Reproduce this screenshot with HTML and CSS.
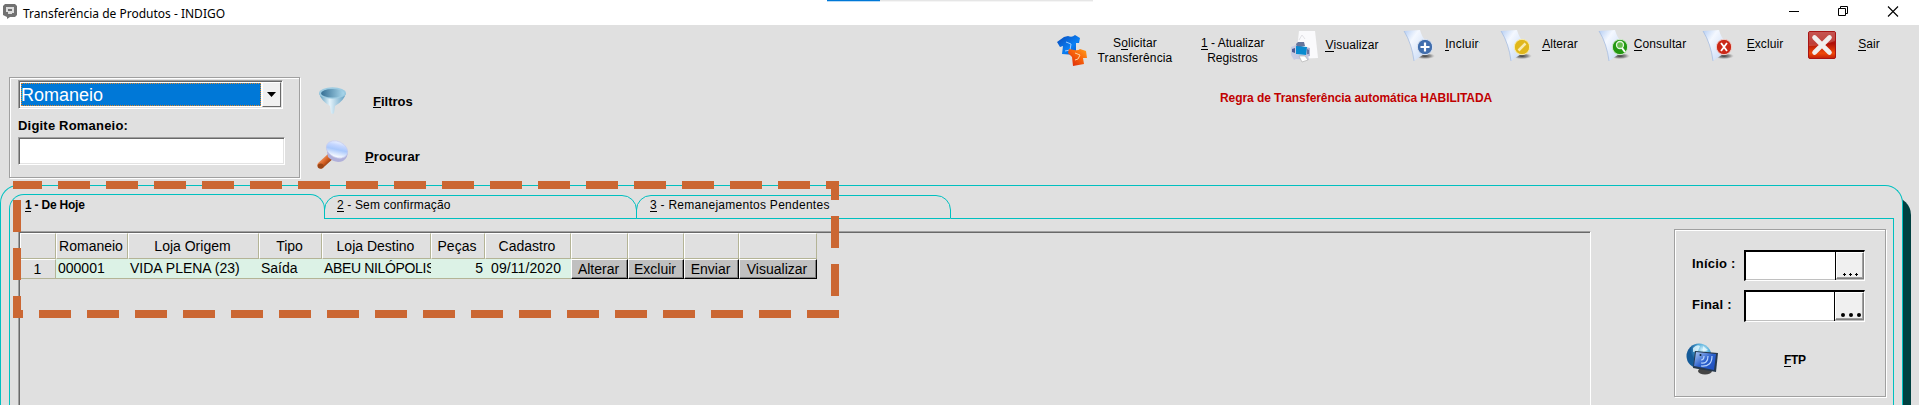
FILE: index.html
```html
<!DOCTYPE html>
<html lang="pt-BR">
<head>
<meta charset="utf-8">
<title>Transferência de Produtos - INDIGO</title>
<link rel="stylesheet" href="styles.css">
</head>
<body>
<svg width="0" height="0" class="defs">
  <defs>
    <linearGradient id="page" x1="0" y1="0" x2="1" y2="1"><stop offset="0" stop-color="#b4cdf3"/><stop offset=".35" stop-color="#f4f8ff"/><stop offset="1" stop-color="#c4d7f4"/></linearGradient>
    <linearGradient id="blue" x1="0" y1="0" x2="1" y2="1"><stop offset="0" stop-color="#0848b8"/><stop offset=".6" stop-color="#0a80f4"/><stop offset="1" stop-color="#0648c0"/></linearGradient>
    <linearGradient id="orange" x1="0" y1="1" x2="1" y2="0"><stop offset="0" stop-color="#d81c08"/><stop offset=".6" stop-color="#fa6a0c"/><stop offset="1" stop-color="#ffa020"/></linearGradient>
    <linearGradient id="funnel" x1="0" y1="0" x2="1" y2="0"><stop offset="0" stop-color="#5598ba"/><stop offset=".4" stop-color="#e4f3fb"/><stop offset="1" stop-color="#5c9cc0"/></linearGradient>
    <linearGradient id="funnelin" x1="0" y1="0" x2="1" y2="0"><stop offset="0" stop-color="#356f94"/><stop offset="1" stop-color="#a9d7ec"/></linearGradient>
    <linearGradient id="lens" x1="0" y1="0" x2=".3" y2="1"><stop offset="0" stop-color="#ffffff"/><stop offset=".35" stop-color="#c4d6ff"/><stop offset=".6" stop-color="#a9c8fc"/><stop offset="1" stop-color="#f4f8ff"/></linearGradient>
    <linearGradient id="handle" gradientUnits="userSpaceOnUse" x1="5" y1="18" x2="12" y2="25"><stop offset="0" stop-color="#f09058"/><stop offset=".5" stop-color="#d05c20"/><stop offset="1" stop-color="#82350c"/></linearGradient>
    <linearGradient id="exit" x1="0" y1="0" x2="0" y2="1"><stop offset="0" stop-color="#b82c28"/><stop offset=".45" stop-color="#b01008"/><stop offset=".8" stop-color="#f04808"/><stop offset="1" stop-color="#c02008"/></linearGradient>
    <radialGradient id="globe" cx=".65" cy=".25"><stop offset="0" stop-color="#d8f4fc"/><stop offset=".5" stop-color="#58b0dc"/><stop offset="1" stop-color="#145a98"/></radialGradient>
    <linearGradient id="screen" x1="0" y1="0" x2="1" y2="1"><stop offset="0" stop-color="#b0ccf4"/><stop offset=".5" stop-color="#2c60cc"/><stop offset="1" stop-color="#1c4cbc"/></linearGradient>
    <radialGradient id="shade"><stop offset="0" stop-color="#333"/><stop offset=".6" stop-color="#777" stop-opacity=".7"/><stop offset="1" stop-color="#aaa" stop-opacity="0"/></radialGradient>
    <symbol id="sheet" viewBox="0 0 32 33">
      <ellipse cx="22" cy="27" rx="10" ry="3.2" fill="url(#shade)"/>
      <path d="M1 2 17 1Q19 8 22 11L21 25 11 32Q9 15 1 2Z" fill="url(#page)"/>
      <path d="M1 2Q9 15 11 32" fill="none" stroke="#9fb8de" stroke-width=".7"/>
    </symbol>
  </defs>
</svg>

<header class="titlebar">
  <svg class="app-icon" width="14" height="15" viewBox="0 0 14 15"><path d="M2 0h10l2 2v9l-2 2H7l-3 2v-2L0 11V2Z" fill="#727272"/><path d="M3 3h8v6H9v1H5V8H3Z" fill="#ddd"/><path d="M5 5h4v2H5Z" fill="#727272"/></svg>
  <h1 class="title">Transferência de Produtos - INDIGO</h1>
  <div class="progress"><i></i></div>
  <svg class="controls" width="112" height="12" viewBox="0 0 112 12"><path d="M0 5.500h10M49.500 2.500h7v7h-7zM51.500 2.500v-2h7v7h-2" fill="none" stroke="#000"/><path d="m99 .5 10 10M109 .5l-10 10" stroke="#000" stroke-width="1.100"/></svg>
</header>

<nav class="toolbar">
  <button class="tool request">
    <svg width="30" height="32" viewBox="0 0 30 32"><path d="M7 3 11 2Q15 4 18 1L23 4 22 9 19 9 19 21 5 20 6 12 3 13 0 8Z" fill="url(#blue)"/><path d="m9 8 5 2-1 6-5 1" fill="none" stroke="#9ccbff"/><path d="m12 15 5 1q4 1 6-1l6 2 1 7h-4l1 6-11 2-1-9-4-4Z" fill="url(#orange)"/><path d="m18 19 5 2-2 4-3 1" fill="none" stroke="#ffd0a0"/></svg>
    <span>S<u>o</u>licitar<br>Transferência</span>
  </button>
  <button class="tool refresh"><span><u>1</u> - Atualizar<br>Registros</span></button>
  <button class="tool view">
    <svg width="28" height="33" viewBox="0 0 28 33"><path d="M9 1 25 1 28 28 6 29Z" fill="#fafafc"/><path d="m9 10 3-5 3 4" fill="none" stroke="#e2e2e6"/><path d="M6 14 8 12h6l1 4-8 2Z" fill="#66769c"/><path d="m1 17 5-2v14l-2 1-3-5Z" fill="#c9cbe2"/><path d="m2 19 3-1v5l-3-1Z" fill="#4d5c94"/><path d="m16 17 4 1v8l-4 1Z" fill="#b4b8d6"/><path d="m17 19 2 1v4h-2Z" fill="#6a739f"/><path d="m4 24 14 1 1 5-13-1Z" fill="#c5c9e2"/><path d="m6 16 11 1-1 8-10-1Z" fill="#0a8bd0"/><path d="m9 26 6 0 3 4-6 2Z" fill="#fff" stroke="#aaa" stroke-width=".6"/></svg>
    <span><u>V</u>isualizar</span>
  </button>
  <button class="tool add">
    <svg width="32" height="33" viewBox="0 0 32 33"><use href="#sheet"/><circle cx="22" cy="18" r="7.7" fill="#416ead" stroke="#e0e8f4"/><path d="M22 13.500v9M17.500 18h9" stroke="#fff" stroke-width="2.200"/></svg>
    <span><u>I</u>ncluir</span>
  </button>
  <i class="tick"></i>
  <button class="tool edit">
    <svg width="32" height="33" viewBox="0 0 32 33"><use href="#sheet"/><circle cx="22" cy="18" r="7.7" fill="#e0b71b" stroke="#f8edb0"/><path d="m18.500 21.500 7-7" stroke="#f8ebb0" stroke-width="2.500"/></svg>
    <span><u>A</u>lterar</span>
  </button>
  <button class="tool find">
    <svg width="32" height="33" viewBox="0 0 32 33"><use href="#sheet"/><circle cx="22" cy="18" r="7.7" fill="#239812" stroke="#d4ecd0"/><circle cx="22" cy="16" r="3.500" fill="#65bd4c" stroke="#e4f6df" stroke-width="1.300"/><path d="m24 19 3 4" stroke="#fff" stroke-width="2"/></svg>
    <span><u>C</u>onsultar</span>
  </button>
  <button class="tool remove">
    <svg width="32" height="33" viewBox="0 0 32 33"><use href="#sheet"/><circle cx="22" cy="18" r="7.7" fill="#cb2817" stroke="#f0d4d0"/><path d="m19 14 6 8m0-8-6 8" stroke="#fff" stroke-width="1.800"/></svg>
    <span><u>E</u>xcluir</span>
  </button>
  <button class="tool exit">
    <svg width="28" height="28" viewBox="0 0 28 28"><rect x=".5" y=".5" width="27" height="27" rx="1.500" fill="url(#exit)" stroke="#a81414"/><path d="M1 1h26v9Q14 15 1 15Z" fill="#fff" opacity=".2"/><path d="m6.500 6.500 15 15m0-15-15 15" stroke="#f0eeee" stroke-width="4.600" stroke-linecap="round"/></svg>
    <span><u>S</u>air</span>
  </button>
</nav>

<section class="filters">
  <div class="etched search">
    <div class="combo"><span>Romaneio</span><b><svg width="9" height="5" viewBox="0 0 9 5"><path d="M0 0h9L4.500 5Z"/></svg></b></div>
    <label class="caption">Digite Romaneio:</label>
    <div class="textbox"></div>
  </div>
  <div class="actions">
    <button class="action">
      <svg width="31" height="30" viewBox="0 0 31 30"><path d="M2 7Q4 15 13 20l1 7q1.500 2 3 0l1-7Q27 15 29 7Z" fill="url(#funnel)"/><ellipse cx="15.500" cy="7" rx="13.500" ry="5.800" fill="#9dcbe1"/><ellipse cx="15.500" cy="7.300" rx="11.500" ry="4.300" fill="url(#funnelin)"/></svg>
      <span class="lbl-filter"><u>F</u>iltros</span>
    </button>
    <button class="action">
      <svg width="31" height="30" viewBox="0 0 31 30"><path d="M4 25 15 15" stroke="url(#handle)" stroke-width="7" stroke-linecap="round"/><ellipse cx="3.600" cy="26" rx="3" ry="2.600" fill="#9c4616"/><path d="M9 6 11 17q7 7 15 4 5-3 5-10Z" fill="#b0b0da"/><ellipse cx="20" cy="9.500" rx="11.200" ry="8" transform="rotate(25 20 9.500)" fill="url(#lens)" stroke="#c6cdee" stroke-width=".7"/></svg>
      <span class="lbl-search"><u>P</u>rocurar</span>
    </button>
  </div>
  <p class="notice">Regra de Transferência automática HABILITADA</p>
</section>

<main class="pageframe">
  <div class="tabs">
    <div class="tab active"><u>1</u> - De Hoje</div>
    <div class="tab t2"><u>2</u> - Sem confirmação</div>
    <div class="tab t3"><u>3</u> - Remanejamentos Pendentes</div>
    <div class="rest"></div>
  </div>
  <div class="sheet">
    <div class="grid">
      <div class="row head">
        <div></div><div>Romaneio</div><div>Loja Origem</div><div>Tipo</div><div>Loja Destino</div><div>Peças</div><div>Cadastro</div><div></div><div></div><div></div><div></div>
      </div>
      <div class="row data">
        <div class="num">1</div><div>000001</div><div>VIDA PLENA (23)</div><div>Saída</div><div class="dest">ABEU NILÓPOLIS</div><div class="right">5</div><div class="date">09/11/2020</div><button>Alterar</button><button>Excluir</button><button>Enviar</button><button>Visualizar</button>
      </div>
    </div>
    <aside class="etched period">
      <div class="field"><label>Início :</label><div class="datebox"><span></span><button><svg width="16" height="4" viewBox="0 0 16 4"><path d="M0 1.500h3M1.500 0v3M6 1.500h3M7.500 0v3M12 1.500h3M13.500 0v3" stroke="#000"/></svg></button></div></div>
      <div class="field second"><label>Final :</label><div class="datebox"><span></span><button><svg width="20" height="4" viewBox="0 0 20 4"><circle cx="2" cy="2" r="2"/><circle cx="10" cy="2" r="2"/><circle cx="18" cy="2" r="2"/></svg></button></div></div>
      <button class="ftp">
        <svg width="33" height="33" viewBox="0 0 33 33"><ellipse cx="19" cy="28" rx="7" ry="3.500" fill="#444"/><circle cx="13" cy="13" r="12.500" fill="url(#globe)"/><path d="M7 5q4-4 7-2l-2 5-5 1Zm10-2 5 4-5 2Z" fill="#e8faff" opacity=".8"/><path d="m9 8 23 2-2 19L7 25Z" fill="#26384e"/><path d="m10 9 20 2-2 16L8 23Z" fill="url(#screen)"/><path d="M15 20q7 1 7-7M15 23q11 1 11-10M15 17q3 0 3-4" fill="none" stroke="#b8d4fc" stroke-width="1.200"/><circle cx="14.500" cy="12" r="1" fill="#123"/></svg>
        <span><u>F</u>TP</span>
      </button>
    </aside>
  </div>
</main>

<svg class="highlight" width="828" height="137" viewBox="0 0 828 137">
  <g fill="none" stroke="#cb6733" stroke-width="8">
    <path d="M-3 4H818" stroke-dasharray="32 16"/>
    <path d="M822 0V115" stroke-dasharray="19 16 32 16 32 200"/>
    <path d="M813 4h13"/>
    <path d="M4 19V137" stroke-dasharray="32 16"/>
    <path d="M-22 133H826" stroke-dasharray="32 16"/>
  </g>
</svg>
</body>
</html>
```

FILE: styles.css
```css
* { box-sizing: border-box; }
html, body { height: 405px; overflow: hidden; }
body { margin: 0; background: #e0e0e0; color: #000; font: 12px/15px "Liberation Sans", Arial, sans-serif; position: relative; }
button { border: 0; margin: 0; padding: 0; background: none; color: inherit; font: inherit; }
svg { display: block; flex: none; }
u { text-decoration: none; box-shadow: inset 0 -1px #000; display: inline-block; line-height: 13px; }
.defs { position: absolute; }

.titlebar { height: 25px; background: #fff; display: flex; align-items: flex-start; }
.app-icon { margin: 4px 0 0 3px; }
.title { margin: 5px 0 0 6px; width: 804px; font: 12px/17px "Noto Sans", sans-serif; white-space: nowrap; }
.progress { width: 266px; height: 2px; background: #e6e6e6; border-bottom: 1px solid #f5f5f5; }
.progress i { display: block; width: 53px; height: 2px; background: #0078d7; border-bottom: 1px solid #b9daf5; }
.controls { margin: 6px 0 0 696px; }

.toolbar { height: 52px; display: flex; align-items: flex-start; padding-left: 1057px; }
.tool { display: flex; align-items: flex-start; white-space: nowrap; text-align: center; }
.request svg { margin-top: 9px; }
.request span { margin: 11px 0 0 10px; width: 76px; letter-spacing: .15px; }
.refresh span { margin: 11px 0 0 28px; width: 63px; }
.view svg { margin: 5px 0 0 26px; }
.view span { margin: 13px 0 0 7px; width: 54px; letter-spacing: .1px; }
.add svg { margin: 4px 0 0 24px; }
.add span { margin: 12px 0 0 10px; width: 34px; letter-spacing: .2px; }
.tick { width: 1px; height: 1px; margin-top: 17px; background: #6cc; }
.edit svg { margin: 4px 0 0 20px; }
.edit span { margin: 12px 0 0 10px; width: 36px; }
.find svg { margin: 4px 0 0 20px; }
.find span { margin: 12px 0 0 3px; width: 54px; letter-spacing: .15px; }
.remove svg { margin: 4px 0 0 15px; }
.remove span { margin: 12px 0 0 12px; width: 38px; letter-spacing: .1px; }
.exit svg { margin: 6px 0 0 24px; }
.exit span { margin: 12px 0 0 22px; width: 22px; letter-spacing: .1px; }

.filters { height: 108px; display: flex; align-items: flex-start; }
.etched { border: 1px solid #a0a0a0; box-shadow: 1px 1px #fff, inset 1px 1px #fff; }
.search { margin-left: 9px; width: 291px; height: 101px; padding: 2px 0 0 8px; }
.combo { width: 265px; height: 29px; display: flex; background: #fff; padding: 1px; border: 1px solid; border-color: #a0a0a0 #fff #fff #a0a0a0; box-shadow: inset 1px 1px #696969, inset -1px -1px #e3e3e3; }
.combo span { width: 241px; margin: 1px; background: #0078d7; color: #fff; font-size: 18px; line-height: 24px; outline: 1px dotted #e08728; outline-offset: -1px; }
.combo b { width: 19px; height: 25px; background: #f0f0f0; border: 1px solid; border-color: #fff #696969 #696969 #fff; display: grid; place-items: center; }
.caption { display: block; font: bold 13px/17px "Liberation Sans", Arial, sans-serif; margin-top: 8px; letter-spacing: .2px; }
.textbox { margin-top: 3px; width: 267px; height: 28px; background: #fff; border: 1px solid; border-color: #a0a0a0 #fff #fff #a0a0a0; box-shadow: inset 1px 1px #696969, inset -1px -1px #e3e3e3; }
.actions { margin: 9px 0 0 17px; width: 110px; display: grid; gap: 24px; }
.action { display: flex; font: bold 13px/15px "Liberation Sans", Arial, sans-serif; }
.lbl-filter { margin: 8px 0 0 25px; }
.lbl-search { margin: 9px 0 0 17px; letter-spacing: .1px; }
.notice { margin: 14px 0 0 793px; color: #c00000; font-weight: bold; line-height: 15px; white-space: nowrap; letter-spacing: -.07px; }

.pageframe { width: 1903px; height: 220px; border: 1px solid #00c0c0; border-bottom: 0; border-radius: 18px 18px 0 0; background: #e0e0e0; box-shadow: 8px 12px #004040; padding: 8px 8px 0 8px; }
.tabs { display: flex; height: 25px; }
.tab { width: 313px; border: 1px solid #00c0c0; border-radius: 15px 15px 0 0; margin-top: 1px; height: 24px; padding: 2px 0 0 12px; line-height: 15px; white-space: nowrap; }
.tab.active { width: 316px; margin-top: 0; height: 25px; border-bottom: 0; padding-top: 3px; font-weight: bold; letter-spacing: -.22px; padding-left: 15px; }
.t2 { margin-left: -1px; letter-spacing: .15px; }
.t3 { margin-left: -1px; width: 315px; letter-spacing: .27px; padding-left: 13px; }
.rest { flex: 1; border-bottom: 1px solid #00c0c0; }
.sheet { border: 1px solid #00c0c0; border-width: 0 1px; height: 186px; display: flex; align-items: flex-start; padding-left: 8px; }

.grid { margin-top: 12px; width: 1573px; height: 174px; border: 1px solid; border-color: #a0a0a0 #fff transparent #a0a0a0; border-bottom: 0; box-shadow: inset 1px 1px #696969; padding: 1px 0 0 1px; font-size: 14px; }
.row { display: grid; grid-template-columns: 36px 72px 131px 63px 109px 54px 86px 57px 56px 55px 78px; width: 797px; }
.head > div { height: 26px; line-height: 25px; text-align: center; border: 1px solid; border-color: #fff #b4b496 #b4b496 #fff; white-space: nowrap; padding-right: 2px; }
.data > div { height: 20px; line-height: 19px; background: #dcf2e6; border-bottom: 1px solid #b4b496; padding-left: 2px; white-space: nowrap; overflow: hidden; }
.data > .num { background: none; border-top: 1px solid #fff; border-right: 1px solid #b4b496; text-align: center; padding: 0; }
.data > .dest { letter-spacing: -.35px; }
.data > .right { text-align: right; padding-right: 2px; }
.data > .date { padding-left: 6px; letter-spacing: .1px; }
.data button { height: 20px; line-height: 18px; background: #c0c0c0; border: 1px solid; border-color: #fff #000 #000 #fff; box-shadow: inset -1px -1px #808080; text-align: center; white-space: nowrap; padding-right: 2px; }

.period { margin: 10px 0 0 83px; width: 212px; height: 168px; padding: 20px 0 0 17px; }
.field { display: flex; font: bold 13px/16px "Liberation Sans", Arial, sans-serif; letter-spacing: .2px; }
.field label { width: 52px; padding-top: 6px; white-space: nowrap; }
.field.second { margin-top: 9px; }
.second label { padding-top: 7px; }
.datebox { width: 121px; height: 31px; display: flex; background: #fff; border: 2px solid #000; border-width: 2px 1px 1px 2px; border-right-color: #fff; border-bottom-color: #fff; box-shadow: inset 0 -1px #c0c0c0; }
.second .datebox { height: 32px; }
.datebox span { flex: 1; border-right: 1px solid #000; }
.datebox button { width: 28px; height: 27px; background: #f0f0f0; border: 1px solid; border-color: #fff #808080 #808080 #fff; box-shadow: inset -1px -1px #a0a0a0; padding: 18px 0 0 6px; }
.second .datebox button { width: 29px; height: 28px; padding: 17px 0 0 5px; }
.ftp { display: flex; margin: 21px 0 0 -6px; font-weight: bold; }
.ftp span { margin: 10px 0 0 65px; letter-spacing: -.3px; }

.highlight { position: absolute; left: 13px; top: 181px; }
```
